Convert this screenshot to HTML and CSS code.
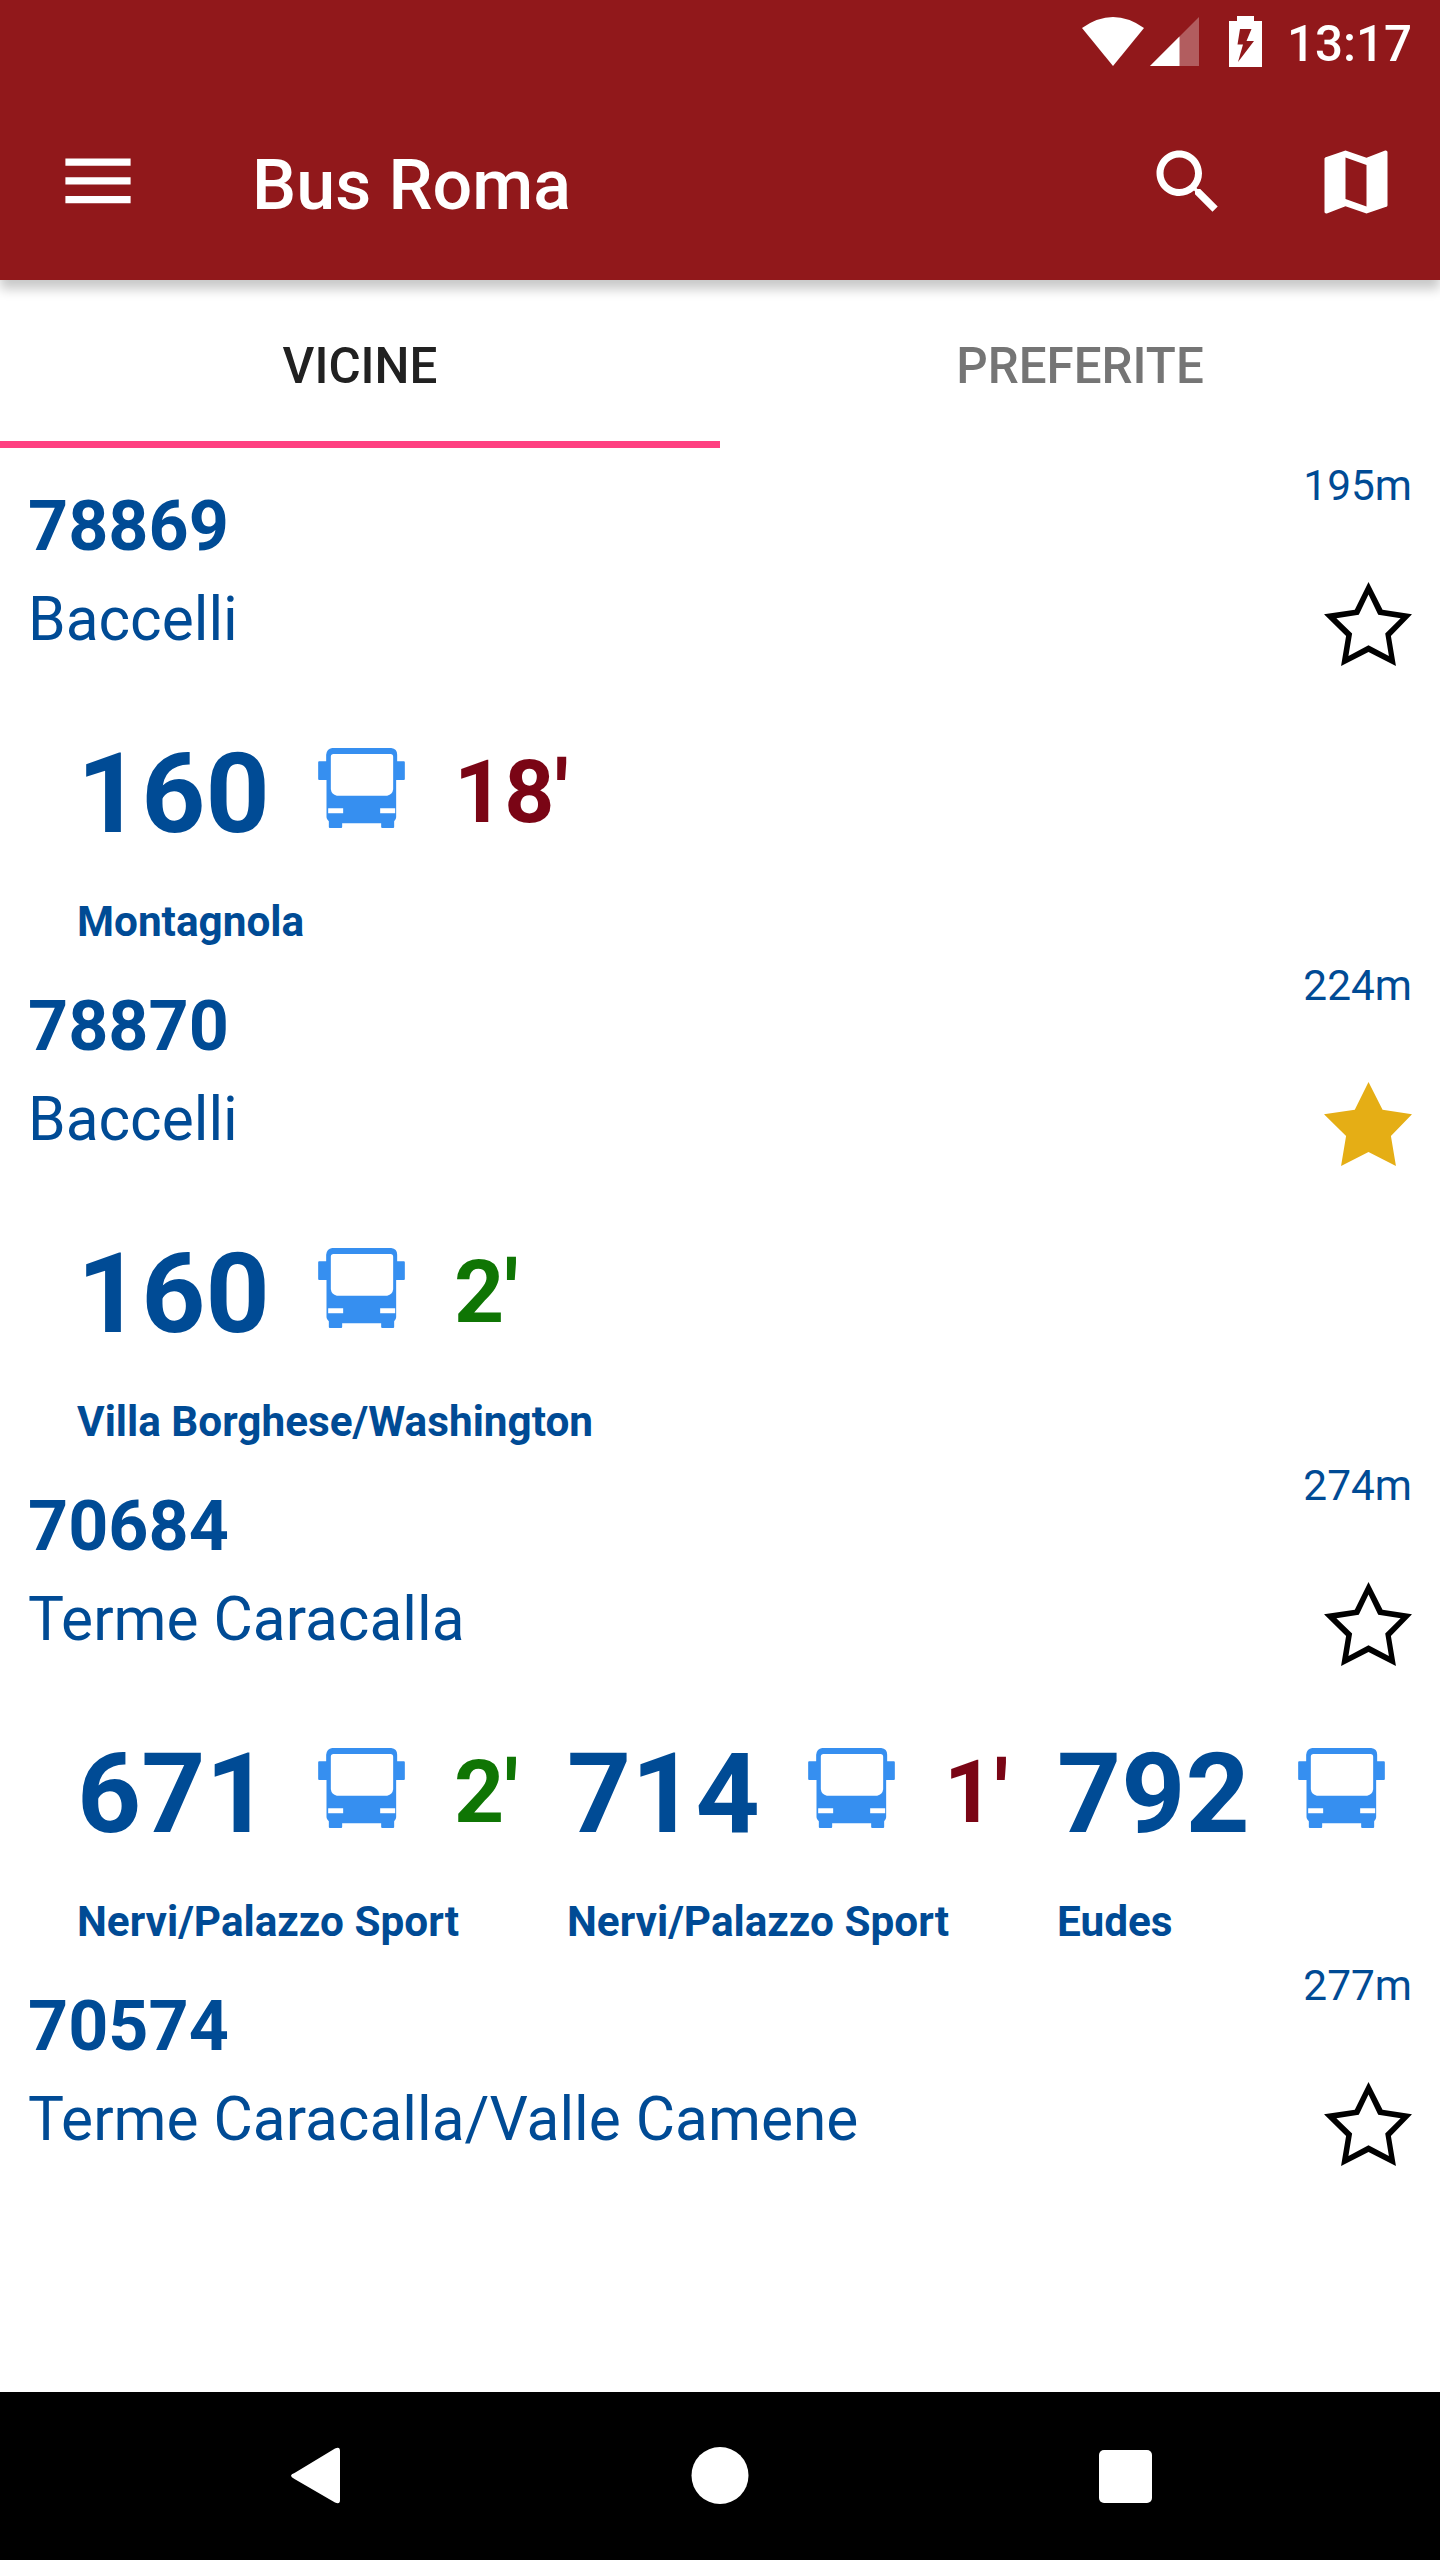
FILE: index.html
```html
<!DOCTYPE html>
<html lang="it">
<head>
    <meta charset="UTF-8">
    <meta name="viewport" content="width=device-width, initial-scale=1.0">
    <title>Bus Roma</title>
    <link rel="stylesheet" href="styles.css">
</head>
<body>
    <!-- Icone riutilizzate nella lista -->
    <svg class="icon-defs" aria-hidden="true">
        <symbol id="bus" viewBox="84 84 260 240">
            <path fill-rule="evenodd" d="M126 84H303Q321 86 321 104V124H341Q344 124 344 127V177Q344 180 341 180H318V292Q318 298 312 304V321Q312 324 309 324H276Q273 324 273 321V310H156V321Q156 324 153 324H119Q116 324 116 321V304Q109 298 109 292V180H87Q84 180 84 177V127Q84 124 87 124H108V104Q110 86 126 84ZM130 102Q122 102 122 110V208Q124 224 140 227H291Q307 224 309 208V110Q309 102 301 102ZM114 265V280H159V265ZM270 265V280H315V265Z"/>
        </symbol>
        <symbol id="star" viewBox="0 0 263 251">
            <path d="M133 0L175 83L263 96L200 161L215 251L133 209L51 251L66 161L0 96L92 83Z"/>
        </symbol>
        <symbol id="star-outline" viewBox="0 0 263 251">
            <path fill-rule="evenodd" d="M133 0L175 83L263 96L200 161L215 251L133 209L51 251L66 161L0 96L92 83ZM133 37L104 98L37 108L84 154L73 221L133 189L194 221L183 154L229 108L162 98Z"/>
        </symbol>
    </svg>

    <div class="status-bar">
        <svg class="wifi" viewBox="0 0 62 49"><path d="M0 11Q31 -11 62 11L31 49Z"/></svg>
        <svg class="signal" viewBox="0 0 49 49"><path opacity=".3" d="M49 0V49H0Z"/><path d="M29.500 19.500V49H0Z"/></svg>
        <svg class="battery" viewBox="0 0 33 51"><path fill-rule="evenodd" d="M8 0H25V5H33V51H0V5H8ZM11 13L8.500 28.500H14L9 46L25 25H17.500L22.500 13Z"/></svg>
        <span class="clock">13:17</span>
    </div>

    <header>
        <svg class="menu" viewBox="0 0 66 46"><path d="M.4 .5H65.600V7.700H.4ZM.4 19.300H65.600V26.500H.4ZM.4 38.100H65.600V45.300H.4Z"/></svg>
        <h1>Bus Roma</h1>
        <svg class="action" viewBox="0 0 24 24"><path d="M15.500 14h-.79l-.28-.27C15.410 12.590 16 11.110 16 9.500 16 5.910 13.090 3 9.500 3S3 5.910 3 9.500 5.910 16 9.500 16c1.610 0 3.090-.59 4.230-1.570l.27.28v.79l5 4.990L20.490 19l-4.990-5zm-6 0C7.010 14 5 11.990 5 9.500S7.010 5 9.500 5 14 7.010 14 9.500 11.990 14 9.500 14z"/></svg>
        <svg class="action" viewBox="0 0 24 24"><path d="M20.500 3l-.16.03L15 5.100 9 3 3.360 4.900c-.21.07-.36.25-.36.48V20.500c0 .28.22.5.5.5l.16-.03L9 18.900l6 2.100 5.640-1.900c.21-.07.36-.25.36-.48V3.500c0-.28-.22-.5-.5-.5zM15 19l-6-2.110V5l6 2.110V19z"/></svg>
    </header>

    <nav class="tabs">
        <a class="tab active">VICINE</a>
        <a class="tab">PREFERITE</a>
    </nav>

    <main>
        <section class="stop">
            <div class="stop-header">
                <div class="stop-info">
                    <h2>78869</h2>
                    <p>Baccelli</p>
                </div>
                <div class="stop-side">
                    <span class="distance">195m</span>
                    <svg class="star"><use href="#star-outline"/></svg>
                </div>
            </div>
            <div class="lines">
                <div class="line">
                    <div class="line-row">
                        <span class="number">160</span>
                        <svg class="bus"><use href="#bus"/></svg>
                        <span class="time late">18'</span>
                    </div>
                    <div class="destination">Montagnola</div>
                </div>
            </div>
        </section>

        <section class="stop">
            <div class="stop-header">
                <div class="stop-info">
                    <h2>78870</h2>
                    <p>Baccelli</p>
                </div>
                <div class="stop-side">
                    <span class="distance">224m</span>
                    <svg class="star favorite"><use href="#star"/></svg>
                </div>
            </div>
            <div class="lines">
                <div class="line">
                    <div class="line-row">
                        <span class="number">160</span>
                        <svg class="bus"><use href="#bus"/></svg>
                        <span class="time">2'</span>
                    </div>
                    <div class="destination">Villa Borghese/Washington</div>
                </div>
            </div>
        </section>

        <section class="stop">
            <div class="stop-header">
                <div class="stop-info">
                    <h2>70684</h2>
                    <p>Terme Caracalla</p>
                </div>
                <div class="stop-side">
                    <span class="distance">274m</span>
                    <svg class="star"><use href="#star-outline"/></svg>
                </div>
            </div>
            <div class="lines">
                <div class="line">
                    <div class="line-row">
                        <span class="number">671</span>
                        <svg class="bus"><use href="#bus"/></svg>
                        <span class="time">2'</span>
                    </div>
                    <div class="destination">Nervi/Palazzo Sport</div>
                </div>
                <div class="line">
                    <div class="line-row">
                        <span class="number">714</span>
                        <svg class="bus"><use href="#bus"/></svg>
                        <span class="time late">1'</span>
                    </div>
                    <div class="destination">Nervi/Palazzo Sport</div>
                </div>
                <div class="line">
                    <div class="line-row">
                        <span class="number">792</span>
                        <svg class="bus"><use href="#bus"/></svg>
                    </div>
                    <div class="destination">Eudes</div>
                </div>
            </div>
        </section>

        <section class="stop">
            <div class="stop-header">
                <div class="stop-info">
                    <h2>70574</h2>
                    <p>Terme Caracalla/Valle Camene</p>
                </div>
                <div class="stop-side">
                    <span class="distance">277m</span>
                    <svg class="star"><use href="#star-outline"/></svg>
                </div>
            </div>
        </section>
    </main>

    <footer class="nav-bar">
        <svg viewBox="0 0 60 60"><path d="M10.500 27L51 2.500Q56 0 56 5V54Q56 59 51 56.500L10.500 33Q3.500 29.500 10.500 27Z"/></svg>
        <svg viewBox="0 0 60 60"><circle cx="30" cy="29.500" r="28.500"/></svg>
        <svg viewBox="0 0 60 60"><rect x="3" y="4" width="53" height="53" rx="5"/></svg>
    </footer>
</body>
</html>
```
FILE: styles.css
```css
* {
    box-sizing: border-box;
}

body {
    font-family: Roboto, sans-serif;
    margin: 0;
    height: 2560px;
    display: flex;
    flex-direction: column;
    background-color: #fff;
    color: #004b95;
    overflow: hidden;
}

h1, h2, p {
    margin: 0;
}

svg {
    display: block;
    flex-shrink: 0;
}

.icon-defs {
    position: absolute;
    width: 0;
    height: 0;
}

/* Barra di stato */
.status-bar {
    height: 84px;
    flex-shrink: 0;
    display: flex;
    justify-content: flex-end;
    align-items: flex-start;
    padding: 16px 28px 0 0;
    background-color: #91181b;
    color: #fff;
    fill: #fff;
}

.wifi {
    width: 62px;
    height: 49px;
    margin: 1px 6px 0 0;
}

.signal {
    width: 49px;
    height: 49px;
    margin: 1px 30px 0 0;
}

.battery {
    width: 33px;
    height: 51px;
    margin-right: 25px;
}

.clock {
    font-size: 49.3px;
    font-weight: 500;
    line-height: 57px;
}

/* Intestazione */
header {
    height: 196px;
    flex-shrink: 0;
    display: flex;
    align-items: center;
    padding: 0 42px 0 65px;
    background-color: #91181b;
    color: #fff;
    fill: #fff;
    box-shadow: 0 9px 11px rgba(0, 0, 0, 0.22);
    clip-path: inset(0 0 -30px 0);
}

.menu {
    width: 66px;
    height: 46px;
    margin: 0 121px 3px 0;
}

header h1 {
    flex: 1;
    font-size: 70px;
    font-weight: 500;
    line-height: 82px;
    padding-top: 6px;
}

.action {
    width: 84px;
    height: 84px;
}

.action + .action {
    margin-left: 84px;
}

/* Schede */
.tabs {
    height: 168px;
    flex-shrink: 0;
    display: flex;
}

.tab {
    flex: 1;
    text-align: center;
    font-size: 49.3px;
    font-weight: 500;
    line-height: 173px;
    color: #757575;
}

.tab.active {
    color: #212121;
    border-bottom: 7px solid #ff4081;
}

/* Lista delle fermate */
main {
    flex: 1;
    min-height: 0;
    overflow: hidden;
}

.stop {
    height: 500px;
}

.stop-header {
    height: 280px;
    display: flex;
    justify-content: space-between;
    padding: 0 28px;
}

.stop-info {
    padding-top: 37px;
}

.stop-info h2 {
    font-size: 70px;
    font-weight: bold;
    line-height: 82px;
}

.stop-info p {
    font-size: 60.4px;
    line-height: 70px;
    margin-top: 18px;
}

.stop-side {
    display: flex;
    flex-direction: column;
    align-items: flex-end;
    padding-top: 13px;
}

.distance {
    font-size: 42.4px;
    line-height: 50px;
}

.star {
    width: 88px;
    height: 84px;
    margin-top: 71px;
    fill: #000;
}

.star.favorite {
    fill: #e5ae15;
}

.lines {
    display: flex;
    padding-left: 77px;
}

.line {
    width: 490px;
    flex-shrink: 0;
    white-space: nowrap;
}

.line-row {
    height: 132px;
    display: flex;
    align-items: center;
}

.number {
    width: 241px;
    flex-shrink: 0;
    font-size: 112px;
    font-weight: bold;
    line-height: 132px;
}

.bus {
    width: 87px;
    height: 80px;
    margin: 0 49px 12px 0;
    fill: #368ff0;
}

.time {
    font-size: 87.5px;
    font-weight: bold;
    line-height: 104px;
    margin-bottom: 4px;
    color: #0f7504;
}

.time.late {
    color: #7a0515;
}

.destination {
    margin-top: 37px;
    font-size: 42.3px;
    font-weight: bold;
    line-height: 49px;
}

/* Barra di navigazione */
.nav-bar {
    height: 168px;
    flex-shrink: 0;
    display: flex;
    justify-content: center;
    align-items: center;
    gap: 346px;
    background-color: #000;
    fill: #fff;
}

.nav-bar svg {
    width: 60px;
    height: 60px;
}
```
